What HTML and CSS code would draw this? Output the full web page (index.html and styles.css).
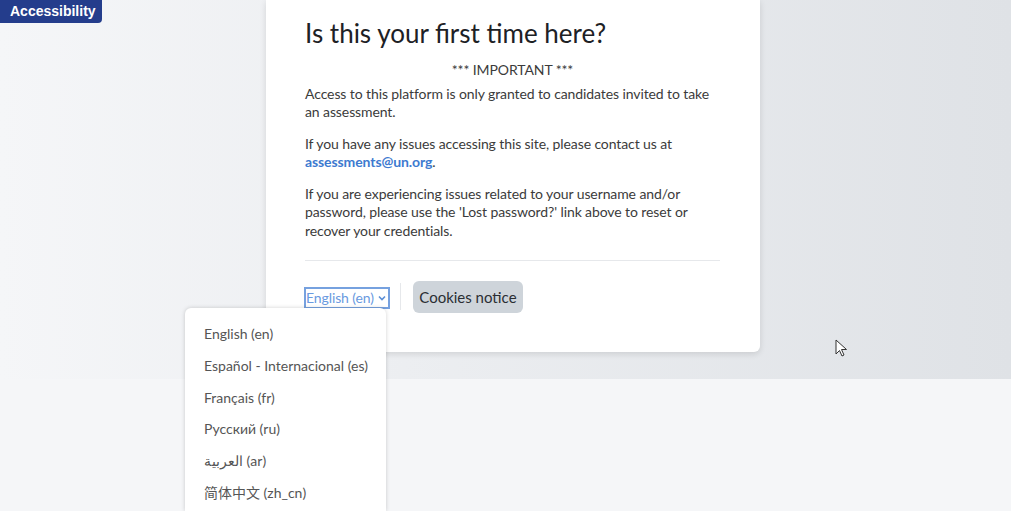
FILE: index.html
```html
<!DOCTYPE html>
<html lang="en">
<head>
<meta charset="utf-8">
<title>Log in</title>
<link rel="stylesheet" href="styles.css">
</head>
<body>
<a class="skip" href="#">Accessibility</a>
<div class="top">
  <div class="card">
    <h2 class="title">Is this your first time here?</h2>
    <p class="important">*** IMPORTANT ***</p>
    <p>Access to this platform is only granted to candidates invited to take an assessment.</p>
    <p>If you have any issues accessing this site, please contact us at <a class="mail" href="#">assessments@un.org</a>.</p>
    <p>If you are experiencing issues related to your username and/or password, please use the 'Lost password?' link above to reset or recover your credentials.</p>
    <hr class="divider">
    <div class="footer">
      <div class="lang">English (en)
        <svg class="chev" width="8" height="6" viewBox="0 0 8 6"><path d="M1 1.5 L4 4.5 L7 1.5" fill="none" stroke="#5b8fd6" stroke-width="1.6"/></svg>
      </div>
      <div class="sep"></div>
      <button class="cookies">Cookies notice</button>
    </div>
    <ul class="menu">
      <li>English (en)</li>
      <li>Español - Internacional (es)</li>
      <li>Français (fr)</li>
      <li>Русский (ru)</li>
      <li><span dir="rtl">العربية</span> (ar)</li>
      <li>简体中文 (zh_cn)</li>
    </ul>
  </div>
</div>
<div class="bottom"></div>
<svg class="cursor" width="14" height="20" viewBox="0 0 14 20"><path d="M1 1 L1 15 L4.5 11.5 L7 17 L9 16 L6.5 10.5 L11.5 10.5 Z" fill="#fff" stroke="#333" stroke-width="1"/></svg>
</body>
</html>
```
FILE: styles.css
```css
html, body {
  margin: 0;
  padding: 0;
  height: 100%;
  overflow: hidden;
  background: #f5f6f8;
  font-family: "Lato", "Noto Sans CJK SC", sans-serif;
}
.skip {
  position: absolute;
  left: 0;
  top: 0;
  width: 102px;
  height: 23px;
  box-sizing: border-box;
  padding-left: 10px;
  background: #243d8c;
  color: #fff;
  font-family: "Liberation Sans", Arial, sans-serif;
  font-weight: bold;
  font-size: 14px;
  line-height: 22px;
  text-decoration: none;
  border-bottom-right-radius: 4px;
  z-index: 5;
}
.top {
  height: 379px;
  background: linear-gradient(to right, #f5f6f8 0%, #eceef1 40%, #dfe2e6 100%);
  padding-left: 266px;
  box-sizing: border-box;
}
.bottom {
  height: 132px;
  background: #f5f6f8;
}
.card {
  position: relative;
  width: 494px;
  height: 352px;
  box-sizing: border-box;
  padding: 17px 40px 0 39px;
  background: #fff;
  border-radius: 0 0 6px 6px;
  box-shadow: 0 2px 6px rgba(0,0,0,0.12);
}
.title {
  margin: 0 0 12px;
  font-weight: 400;
  font-size: 26px;
  line-height: 32px;
  color: #1d2125;
}
.important {
  text-align: center;
  font-size: 15px;
  color: #1d2125;
  margin: 0 0 5px !important;
}
.card p {
  margin: 0 0 13px;
  font-size: 14px;
  line-height: 18.5px;
  letter-spacing: -0.1px;
  color: #3b3b3b;
}
.mail {
  color: #3d7ad0;
  font-weight: bold;
  text-decoration: none;
}
.divider {
  border: 0;
  border-top: 1px solid #e6e8eb;
  margin: 20px 0 19px;
}
.footer {
  display: flex;
  align-items: center;
}
.lang {
  display: flex;
  align-items: center;
  gap: 4px;
  height: 22px;
  box-sizing: border-box;
  border: 2px solid #76a1df;
  padding: 0 2px 0 0;
  margin-left: -1px;
  margin-top: 2px;
  color: #6a9ae0;
  font-size: 14px;
  letter-spacing: -0.1px;
}
.chev {
  margin-top: 1px;
}
.sep {
  width: 1px;
  height: 27px;
  background: #e6e8eb;
  margin: 0 12px 0 10px;
}
.cookies {
  height: 32px;
  width: 110px;
  border: 0;
  border-radius: 6px;
  background: #ced4da;
  color: #2a2e33;
  font-family: inherit;
  font-size: 15px;
  padding: 0;
  margin-top: 1px;
}
.menu {
  position: absolute;
  left: -81px;
  top: 308px;
  width: 201px;
  height: 203px;
  box-sizing: border-box;
  margin: 0;
  padding: 16px 0 0;
  list-style: none;
  background: #fff;
  border-radius: 6px 6px 0 0;
  box-shadow: 0 0 4px rgba(0,0,0,0.18);
  z-index: 4;
  overflow: hidden;
}
.menu li {
  height: 31.8px;
  line-height: 20px;
  padding-left: 19px;
  font-size: 14px;
  color: #555;
}
.cursor {
  position: absolute;
  left: 835px;
  top: 339px;
}
```
